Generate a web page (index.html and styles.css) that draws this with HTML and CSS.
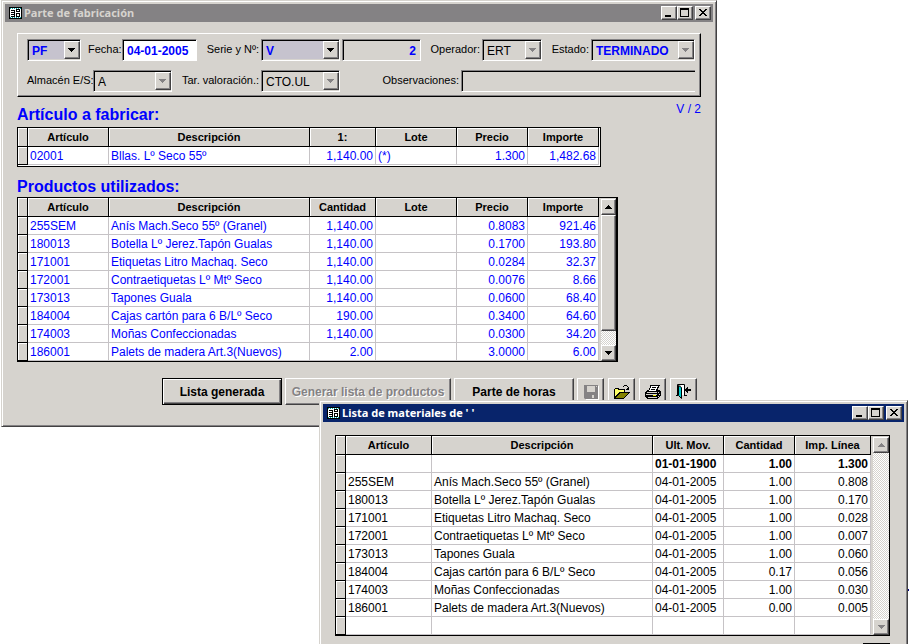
FILE: index.html
```html
<!DOCTYPE html>
<html lang="es">
<head>
  <meta charset="UTF-8" />
  <meta name="viewport" content="width=device-width, initial-scale=1.0"/>
  <title>Parte de fabricación</title>
  <link rel="stylesheet" href="styles.css">
</head>
<body>
  <svg width="0" height="0" class="defs" aria-hidden="true">
    <symbol id="form-icon" viewBox="0 0 13 12">
      <path fill="#000" d="M0 0h13v12H0z"/>
      <path fill="#fff" d="M1 1h11v10H1z"/>
      <path stroke="#0aa" d="M1 1.5h11M1 10.5h11" stroke-dasharray="1 1"/>
      <path stroke="#000" d="M2 3.5h4M2 5.5h4M2 7.5h4M2 9.5h4M7 2.5h4M7 4.5h4M7 6.5h4M7 9.5h4M7.500 2v3M10.500 2v3M7.500 6v4M10.500 6v4M5.500 3v6"/>
    </symbol>
    <symbol id="min-icon" viewBox="0 0 12 10"><path d="M2 7h6v2H2z"/></symbol>
    <symbol id="max-icon" viewBox="0 0 12 10"><path fill-rule="evenodd" d="M1 0h9v9H1zM2 2v6h7V2z"/></symbol>
    <symbol id="close-icon" viewBox="0 0 12 10"><path d="M2 1h2v1h1v1h2V2h1V1h2v1H9v1H8v1H7v1h1v1h1v1h1v1H8V7H7V6H5v1H4v1H2V7h1V6h1V5h1V4H4V3H3V2H2z"/></symbol>
    <symbol id="up-icon" viewBox="0 0 7 4"><path d="M3 0h1v1h1v1h1v1h1v1H0V3h1V2h1V1h1z"/></symbol>
    <symbol id="down-icon" viewBox="0 0 7 4"><path d="M0 0h7v1H6v1H5v1H4v1H3V3H2V2H1V1H0z"/></symbol>
  </svg>

  <main class="desktop">
    <div class="back-line"></div>

    <!-- Parte de fabricación -->
    <section class="window window-parte">
      <header class="titlebar">
        <svg class="title-icon"><use href="#form-icon"/></svg>
        <h1>Parte de fabricación</h1>
        <button type="button" class="win-btn" aria-label="Minimizar"><svg><use href="#min-icon"/></svg></button>
        <button type="button" class="win-btn" aria-label="Maximizar"><svg><use href="#max-icon"/></svg></button>
        <button type="button" class="win-btn close" aria-label="Cerrar"><svg><use href="#close-icon"/></svg></button>
      </header>

      <div class="parte-body">
        <form class="panel">
          <div class="row">
            <span class="combo w-tipo"><select class="strong active" aria-label="Tipo"><option>PF</option></select><svg><use href="#down-icon"/></svg></span>
            <div class="field">
              <label class="l-fecha" for="fecha">Fecha:</label>
              <input class="box strong white w-fecha" id="fecha" type="text" value="04-01-2005">
            </div>
            <div class="field">
              <label class="l-serie" for="serie">Serie y Nº:</label>
              <span class="combo w-std"><select class="strong active" id="serie"><option>V</option></select><svg><use href="#down-icon"/></svg></span>
              <input class="box strong num w-std" type="text" aria-label="Número" value="2">
            </div>
            <div class="field">
              <label class="l-operador" for="operador">Operador:</label>
              <span class="combo off w-operador"><select id="operador" disabled><option>ERT</option></select><svg><use href="#down-icon"/></svg></span>
            </div>
            <div class="field grow">
              <label class="l-estado" for="estado">Estado:</label>
              <span class="combo off grow"><select class="strong" id="estado" disabled><option>TERMINADO</option></select><svg><use href="#down-icon"/></svg></span>
            </div>
          </div>
          <div class="row">
            <div class="field">
              <label class="l-almacen" for="almacen">Almacén E/S:</label>
              <span class="combo off w-std"><select id="almacen" disabled><option>A</option></select><svg><use href="#down-icon"/></svg></span>
            </div>
            <div class="field">
              <label class="l-tarifa" for="tarifa">Tar. valoración.:</label>
              <span class="combo off w-std"><select id="tarifa" disabled><option>CTO.UL</option></select><svg><use href="#down-icon"/></svg></span>
            </div>
            <div class="field grow">
              <label class="l-obs" for="obs">Observaciones:</label>
              <input class="box open grow" id="obs" type="text">
            </div>
          </div>
        </form>

        <div class="heading">
          <h2>Artículo a fabricar:</h2>
          <span class="doc-ref">V / 2</span>
        </div>
        <div class="sheet blue short">
          <table>
            <colgroup><col class="c-sel"><col class="c-art"><col><col class="c-cant"><col class="c-lote"><col class="c-num"><col class="c-num"></colgroup>
            <thead>
              <tr><th></th><th>Artículo</th><th>Descripción</th><th>1:</th><th>Lote</th><th>Precio</th><th>Importe</th></tr>
            </thead>
            <tbody>
              <tr><td></td><td>02001</td><td>Bllas. Lº Seco 55º</td><td class="n">1,140.00</td><td>(*)</td><td class="n">1.300</td><td class="n">1,482.68</td></tr>
            </tbody>
          </table>
        </div>

        <div class="heading second">
          <h2>Productos utilizados:</h2>
        </div>
        <div class="sheet blue long">
          <table>
            <colgroup><col class="c-sel"><col class="c-art"><col><col class="c-cant"><col class="c-lote"><col class="c-num"><col class="c-num"></colgroup>
            <thead>
              <tr><th></th><th>Artículo</th><th>Descripción</th><th>Cantidad</th><th>Lote</th><th>Precio</th><th>Importe</th></tr>
            </thead>
            <tbody>
              <tr><td></td><td>255SEM</td><td>Anís Mach.Seco 55º (Granel)</td><td class="n">1,140.00</td><td></td><td class="n">0.8083</td><td class="n">921.46</td></tr>
              <tr><td></td><td>180013</td><td>Botella Lº Jerez.Tapón Gualas</td><td class="n">1,140.00</td><td></td><td class="n">0.1700</td><td class="n">193.80</td></tr>
              <tr><td></td><td>171001</td><td>Etiquetas Litro Machaq. Seco</td><td class="n">1,140.00</td><td></td><td class="n">0.0284</td><td class="n">32.37</td></tr>
              <tr><td></td><td>172001</td><td>Contraetiquetas Lº Mtº Seco</td><td class="n">1,140.00</td><td></td><td class="n">0.0076</td><td class="n">8.66</td></tr>
              <tr><td></td><td>173013</td><td>Tapones Guala</td><td class="n">1,140.00</td><td></td><td class="n">0.0600</td><td class="n">68.40</td></tr>
              <tr><td></td><td>184004</td><td>Cajas cartón para 6 B/Lº Seco</td><td class="n">190.00</td><td></td><td class="n">0.3400</td><td class="n">64.60</td></tr>
              <tr><td></td><td>174003</td><td>Moñas Confeccionadas</td><td class="n">1,140.00</td><td></td><td class="n">0.0300</td><td class="n">34.20</td></tr>
              <tr><td></td><td>186001</td><td>Palets de madera Art.3(Nuevos)</td><td class="n">2.00</td><td></td><td class="n">3.0000</td><td class="n">6.00</td></tr>
            </tbody>
          </table>
          <div class="scrollbar">
            <button type="button" aria-label="Subir"><svg><use href="#up-icon"/></svg></button>
            <div class="thumb"></div>
            <div class="track"></div>
            <button type="button" aria-label="Bajar"><svg><use href="#down-icon"/></svg></button>
          </div>
        </div>

        <div class="actions">
          <button type="button" class="btn default w-lista">Lista generada</button>
          <button type="button" class="btn w-generar" disabled>Generar lista de productos</button>
          <button type="button" class="btn w-lista">Parte de horas</button>
          <div class="tools">
            <button type="button" class="btn tool" aria-label="Guardar" disabled>
              <svg viewBox="0 0 18 16">
                <path fill="#fff" d="M3 2h14v14H4z"/>
                <path fill="#848284" d="M2 1h14v14H3l-1-1z"/>
                <path fill="#d6d3ce" d="M5 2h8v6H5zM14 2h1v1h-1zM10 11h2v3h-2z"/>
              </svg>
            </button>
            <button type="button" class="btn tool" aria-label="Abrir">
              <svg viewBox="0 0 18 16">
                <path fill="#000" d="M1 5h1V4h4v1h6v3h5v1h-1v1h-1v1h-1v1h-1v1h-1v1h-1v1H1z"/>
                <path fill="#ff6" d="M2 5h3v1h6v2H6v1H5v1H4v1H3v1H2z"/>
                <path fill="#848200" d="M7 9h8v1h-1v1h-1v1h-1v1h-1v1H3v-1h1v-1h1v-1h1v-1h1z"/>
                <path fill="none" stroke="#000" d="M10 2.500h1M11 1.500h3M14 2.500h1M15.500 3v3M13 5.500h3M14 4.500h2"/>
              </svg>
            </button>
            <button type="button" class="btn tool" aria-label="Imprimir">
              <svg viewBox="0 0 18 16">
                <path fill="#000" d="M6 1h10v1h-1v2h-1v2h2v1h1v5h-1v1h-1v1h-1v1H3v-1H2v-1H1V8h1V7h1V6h2V4h1z"/>
                <path fill="#fff" d="M7 2h7v1h-1v2h-1v2H5V6h1V4h1z"/>
                <path stroke="#000" d="M8 3.500h4M7 5.500h4"/>
                <path fill="#d6d3ce" d="M3 8h10v1H3zM2 10h11v1H2zM4 13h9v1H4zM14 8h1v1h-1zM15 10h1v1h-1zM14 12h1v1h-1z"/>
                <path fill="#ee0" d="M9 11h3v1H9z"/>
              </svg>
            </button>
            <button type="button" class="btn tool" aria-label="Salir">
              <svg viewBox="0 0 18 16">
                <path fill="none" stroke="#000" d="M2.500 12V.5h7V12M1 11.500h2M9 11.500h3"/>
                <path fill="#fff" d="M6 1h3v10H6z"/>
                <path fill="#0cc" stroke="#000" d="M3.500 1.500L6.500 3.500V14.500L3.500 11.500z"/>
                <path fill="#000" d="M10 5h1V4h1V3h1v2h3v2h-3v2h-1V8h-1V7h-1z"/>
              </svg>
            </button>
          </div>
        </div>
      </div>
    </section>

    <!-- Lista de materiales -->
    <section class="window window-lista">
      <header class="titlebar current">
        <svg class="title-icon"><use href="#form-icon"/></svg>
        <h1>Lista de materiales de ' '</h1>
        <button type="button" class="win-btn" aria-label="Minimizar"><svg><use href="#min-icon"/></svg></button>
        <button type="button" class="win-btn" aria-label="Maximizar"><svg><use href="#max-icon"/></svg></button>
        <button type="button" class="win-btn close" aria-label="Cerrar"><svg><use href="#close-icon"/></svg></button>
      </header>

      <div class="lista-body">
        <div class="sheet">
          <table>
            <colgroup><col class="c-sel"><col class="c-art2"><col><col class="c-num"><col class="c-num"><col class="c-imp"></colgroup>
            <thead>
              <tr><th></th><th>Artículo</th><th>Descripción</th><th>Ult. Mov.</th><th>Cantidad</th><th>Imp. Línea</th></tr>
            </thead>
            <tbody>
              <tr class="total"><td></td><td></td><td></td><td>01-01-1900</td><td class="n">1.00</td><td class="n">1.300</td></tr>
              <tr><td></td><td>255SEM</td><td>Anís Mach.Seco 55º (Granel)</td><td>04-01-2005</td><td class="n">1.00</td><td class="n">0.808</td></tr>
              <tr><td></td><td>180013</td><td>Botella Lº Jerez.Tapón Gualas</td><td>04-01-2005</td><td class="n">1.00</td><td class="n">0.170</td></tr>
              <tr><td></td><td>171001</td><td>Etiquetas Litro Machaq. Seco</td><td>04-01-2005</td><td class="n">1.00</td><td class="n">0.028</td></tr>
              <tr><td></td><td>172001</td><td>Contraetiquetas Lº Mtº Seco</td><td>04-01-2005</td><td class="n">1.00</td><td class="n">0.007</td></tr>
              <tr><td></td><td>173013</td><td>Tapones Guala</td><td>04-01-2005</td><td class="n">1.00</td><td class="n">0.060</td></tr>
              <tr><td></td><td>184004</td><td>Cajas cartón para 6 B/Lº Seco</td><td>04-01-2005</td><td class="n">0.17</td><td class="n">0.056</td></tr>
              <tr><td></td><td>174003</td><td>Moñas Confeccionadas</td><td>04-01-2005</td><td class="n">1.00</td><td class="n">0.030</td></tr>
              <tr><td></td><td>186001</td><td>Palets de madera Art.3(Nuevos)</td><td>04-01-2005</td><td class="n">0.00</td><td class="n">0.005</td></tr>
              <tr><td></td><td></td><td></td><td></td><td></td><td></td></tr>
            </tbody>
          </table>
          <div class="scrollbar off">
            <button type="button" aria-label="Subir" disabled><svg><use href="#up-icon"/></svg></button>
            <div class="track"></div>
            <button type="button" aria-label="Bajar" disabled><svg><use href="#down-icon"/></svg></button>
          </div>
        </div>
        <div class="lista-actions">
          <button type="button" class="btn default tool" aria-label="Salir"></button>
        </div>
      </div>
    </section>
  </main>
</body>
</html>
```
FILE: styles.css
```css
* {
  box-sizing: border-box;
}

body, html {
  margin: 0;
  padding: 0;
  height: 100%;
  background-color: #ffffff;
  font-family: "Liberation Sans", Arial, sans-serif;
  font-size: 11px;
  color: #000;
}

h1, h2 {
  margin: 0;
}

button, input, select {
  font-family: inherit;
  color: #000;
  margin: 0;
  border-radius: 0;
}

.defs {
  position: absolute;
}

.desktop {
  position: relative;
  height: 100vh;
  overflow: hidden;
}

.back-line {
  position: absolute;
  top: 589px;
  right: 0;
  width: 4px;
  height: 2px;
  background-color: #000084;
}

/* Windows */
.window {
  position: absolute;
  background-color: #d6d3ce;
  padding: 3px;
  border: 1px solid;
  border-color: #d6d3ce #424142 #424142 #d6d3ce;
  box-shadow: inset 1px 1px 0 #fff, inset -1px -1px 0 #848284;
}

.window-parte {
  top: 0;
  left: 1px;
  right: 192px;
}

.window-lista {
  top: 400px;
  left: 319px;
  right: 1px;
}

.titlebar {
  display: flex;
  align-items: center;
  height: 18px;
  padding: 0 2px 0 4px;
  background-color: #848284;
}

.titlebar.current {
  background-color: #08246b;
}

.titlebar h1 {
  flex: 1;
  margin-left: 2px;
  font-family: "Noto Sans", Tahoma, sans-serif;
  font-size: 11px;
  line-height: 18px;
  font-weight: bold;
  color: #d6d3ce;
}

.titlebar.current h1 {
  color: #fff;
}

.title-icon {
  width: 13px;
  height: 12px;
}

.win-btn {
  width: 16px;
  height: 14px;
  padding: 0;
  line-height: 0;
  background-color: #d6d3ce;
  border: 1px solid;
  border-color: #fff #424142 #424142 #fff;
  box-shadow: inset -1px -1px 0 #848284;
}

.win-btn svg {
  width: 12px;
  height: 10px;
}

.win-btn.close {
  margin-left: 2px;
}

/* Form panel */
.parte-body {
  padding: 11px 12px 18px;
}

.panel {
  display: flex;
  flex-direction: column;
  gap: 9px;
  padding: 5px 5px 4px 9px;
  border: 1px solid;
  border-color: #fff #000 #000 #fff;
  box-shadow: inset -1px -1px 0 #848284;
}

.row {
  display: flex;
  gap: 7px;
}

.field {
  display: flex;
  gap: 2px;
}

.field label {
  line-height: 20px;
  text-align: right;
  white-space: nowrap;
}

.grow {
  flex: 1;
  min-width: 0;
}

.box, .combo {
  height: 22px;
  border: 1px solid;
  border-color: #848284 #fff #fff #848284;
  box-shadow: inset 1px 1px 0 #000;
  background-color: #d6d3ce;
}

.box {
  padding: 2px 4px 0;
  font-size: 12px;
  outline: none;
}

.box.white {
  background-color: #fff;
}

.box.open {
  border-right: none;
}

.box.num {
  text-align: right;
}

.combo {
  position: relative;
  display: block;
  padding: 1px;
}

.combo select {
  appearance: none;
  width: 100%;
  height: 18px;
  padding: 2px 16px 0 3px;
  border: none;
  background-color: #d6d3ce;
  font-size: 12px;
  line-height: 16px;
  opacity: 1;
}

.combo select.active {
  background-color: #c6c3ce;
}

.combo svg {
  position: absolute;
  top: 1px;
  right: 0;
  width: 16px;
  height: 18px;
  padding: 6px 4px 6px 3px;
  background-color: #d6d3ce;
  border: 1px solid;
  border-color: #fff #424142 #424142 #fff;
  box-shadow: inset -1px -1px 0 #848284;
  pointer-events: none;
}

.off svg {
  fill: #848284;
}

.strong, .combo select.strong {
  font-weight: bold;
  color: #0000ff;
}

.w-tipo { width: 54px; }
.w-fecha { width: 75px; }
.w-std { width: 79px; }
.w-operador { width: 60px; }

.l-fecha { width: 32px; }
.l-serie { width: 55px; }
.l-operador { width: 52px; }
.l-estado { width: 40px; }
.l-almacen { width: 64px; }
.l-tarifa { width: 80px; }
.l-obs { width: 112px; }

.heading {
  display: flex;
  justify-content: space-between;
  padding: 8px 0 2px;
}

.heading.second {
  padding: 10px 0 0;
}

.heading h2 {
  font-size: 16px;
  line-height: 20px;
  color: #0000ff;
}

.doc-ref {
  font-size: 12px;
  line-height: 8px;
  color: #0000ff;
}

/* Tables */
.sheet {
  display: flex;
  border: 1px solid #000;
  background-color: #fff;
}

.sheet.short {
  margin-right: 100px;
  padding: 0 1px 1px 0;
}

.sheet.long {
  margin-right: 83px;
  border-right-width: 2px;
}

.sheet table {
  flex: 1;
  width: 100%;
  table-layout: fixed;
  border-collapse: separate;
  border-spacing: 0;
}

.sheet th {
  height: 19px;
  padding: 0;
  background-color: #d6d3ce;
  border-right: 1px solid #000;
  border-bottom: 1px solid #000;
  box-shadow: inset 1px 1px 0 #fff;
  font-size: 11px;
  line-height: 18px;
}

.sheet td {
  height: 18px;
  padding: 2px 2px 0;
  border-right: 1px solid #c6c3c6;
  border-bottom: 1px solid #c6c3c6;
  font-size: 12px;
  line-height: 15px;
  white-space: nowrap;
}

.sheet td:first-child {
  background-color: #d6d3ce;
  border-color: #000;
  box-shadow: inset 1px 1px 0 #fff;
}

.blue td {
  color: #0000ff;
}

.sheet td.n {
  text-align: right;
}

.total td {
  font-weight: bold;
}

.c-sel { width: 10px; }
.c-art { width: 81px; }
.c-art2 { width: 86px; }
.c-cant { width: 66px; }
.c-lote { width: 81px; }
.c-num { width: 71px; }
.c-imp { width: 76px; }

.scrollbar {
  display: flex;
  flex-direction: column;
  width: 18px;
  padding: 1px 0 0 2px;
  background-color: #d6d3ce;
}

.long .scrollbar {
  width: 17px;
}

.scrollbar button {
  height: 16px;
  padding: 0;
  line-height: 0;
}

.scrollbar button, .thumb {
  background-color: #d6d3ce;
  border: 1px solid;
  border-color: #fff #424142 #424142 #fff;
  box-shadow: inset -1px -1px 0 #848284;
}

.scrollbar button svg {
  width: 7px;
  height: 4px;
}

.thumb {
  flex: 8;
}

.track {
  flex: 1;
  background: repeating-conic-gradient(#fff 0 25%, #d6d3ce 0 50%) 0 0 / 2px 2px;
}

/* Buttons */
.actions {
  display: flex;
  gap: 3px;
  margin: 16px 0 0 145px;
}

.btn {
  height: 27px;
  padding: 0;
  background-color: #d6d3ce;
  border: 1px solid;
  border-color: #fff #424142 #424142 #fff;
  box-shadow: inset -1px -1px 0 #848284;
  font-size: 12px;
  font-weight: bold;
  white-space: nowrap;
}

.btn.default {
  border-color: #000;
  box-shadow: inset 1px 1px 0 #fff, inset -1px -1px 0 #424142, inset -2px -2px 0 #848284;
}

.btn:disabled {
  color: #848284;
  text-shadow: 1px 1px 0 #fff;
}

.w-lista { width: 120px; }
.w-generar { width: 166px; }

.tools {
  display: flex;
  gap: 4px;
}

.tool {
  width: 27px;
  line-height: 0;
}

.tool svg {
  width: 18px;
  height: 16px;
}

.lista-body {
  padding: 13px 14px 12px 12px;
}

.lista-actions {
  display: flex;
  justify-content: flex-end;
  margin-top: 7px;
}
```
